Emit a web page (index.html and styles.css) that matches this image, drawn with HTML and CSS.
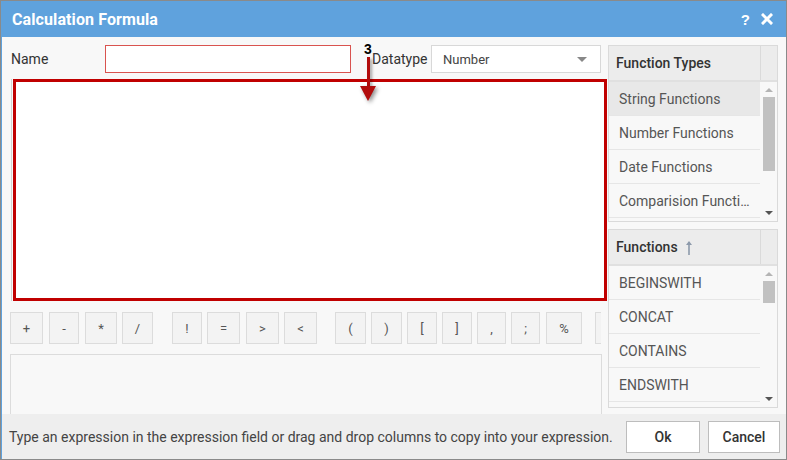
FILE: index.html
```html
<!DOCTYPE html>
<html>
<head>
<meta charset="utf-8">
<link rel="stylesheet" href="styles.css">
</head>
<body>
<div class="dialog">
  <div class="titlebar">
    <span class="title">Calculation Formula</span>
    <div class="tools">
      <span class="help">?</span>
      <svg class="close" width="12" height="12" viewBox="0 0 12 12"><path d="M2 2L10 10M10 2L2 10" stroke="#fff" stroke-width="3" stroke-linecap="square"/></svg>
    </div>
  </div>
  <div class="main">
    <div class="left">
      <div class="row1">
        <label class="lbl name-lbl">Name</label>
        <div class="name-input"></div>
        <label class="lbl dt-lbl">Datatype</label>
        <div class="select"><span class="sel-text">Number</span><span class="caret"></span></div>
      </div>
      <div class="editor-wrap"><div class="editor"></div></div>
      <div class="ops">
        <span class="op">+</span><span class="op">-</span><span class="op">*</span><span class="op">/</span>
        <span class="op">!</span><span class="op">=</span><span class="op">&gt;</span><span class="op">&lt;</span>
        <span class="op">(</span><span class="op">)</span><span class="op">[</span><span class="op">]</span><span class="op">,</span><span class="op">;</span><span class="op">%</span>
        <span class="op"></span>
      </div>
      <div class="desc"></div>
    </div>
    <div class="right">
      <div class="panel types">
        <div class="phead"><span class="ptitle">Function Types</span><span class="pcorner"></span></div>
        <div class="pbody">
          <ul class="plist">
            <li class="sel">String Functions</li>
            <li>Number Functions</li>
            <li>Date Functions</li>
            <li>Comparision Functi…</li>
          </ul>
          <div class="sbar">
            <span class="arr up"></span>
            <span class="thumb thumb-types"></span>
            <span class="arr down"></span>
          </div>
        </div>
      </div>
      <div class="panel funcs">
        <div class="phead"><span class="ptitle">Functions
          <svg class="sort" width="8" height="15" viewBox="0 0 8 15"><path d="M4 2V15" stroke="#8d9aab" stroke-width="1.6"/><path d="M1 5L4 1L7 5Z" fill="#8d9aab"/></svg></span><span class="pcorner"></span></div>
        <div class="pbody">
          <ul class="plist">
            <li>BEGINSWITH</li>
            <li>CONCAT</li>
            <li>CONTAINS</li>
            <li>ENDSWITH</li>
          </ul>
          <div class="sbar">
            <span class="arr up"></span>
            <span class="thumb thumb-funcs"></span>
            <span class="arr down"></span>
          </div>
        </div>
      </div>
    </div>
  </div>
  <div class="footer">
    <span class="hint">Type an expression in the expression field or drag and drop columns to copy into your expression.</span>
    <div class="btns"><span class="btn ok">Ok</span><span class="btn cancel">Cancel</span></div>
  </div>
  <div class="annot">
    <span class="num">3</span>
    <span class="shaft"></span>
    <span class="head"></span>
  </div>
</div>
</body>
</html>
```

FILE: styles.css
```css
* { box-sizing: border-box; }
html, body { margin: 0; padding: 0; background: #fff; }
body { font-family: Roboto, "Liberation Sans", Arial, sans-serif; font-size: 14px; color: #333; }

.dialog {
  position: relative;
  width: 787px;
  height: 460px;
  border: 1px solid #8a8a8a;
  background: #f8f8f8;
  overflow: hidden;
}

.titlebar {
  height: 36px;
  background: #5fa2dd;
  display: flex;
  align-items: center;
  justify-content: space-between;
  padding: 0 13px 0 11px;
}
.title { color: #fff; font-weight: bold; font-size: 16px; letter-spacing: 0.1px; }
.tools { display: flex; align-items: center; gap: 11px; }
.help { color: #fff; font-weight: bold; font-size: 15px; font-family: "Liberation Sans", Arial, sans-serif; }
.close { display: block; }

.main {
  height: 377px;
  display: flex;
  padding-top: 8px;
  border-left: 1px solid #5fa2dd;
}
.left { width: 606px; padding-left: 9px; }

.row1 { display: flex; align-items: center; height: 28px; }
.lbl { color: #333; font-size: 14px; }
.name-lbl { width: 94px; }
.name-input { width: 246px; height: 28px; border: 1px solid #d9534f; background: #fff; }
.dt-lbl { margin-left: 21px; width: 59px; }
.select {
  width: 170px; height: 28px; border: 1px solid #d8d8d8; background: #fff;
  display: flex; align-items: center; justify-content: space-between; padding: 0 13px 0 11px;
}
.sel-text { font-size: 13px; color: #444; }
.caret { width: 0; height: 0; border-left: 5px solid transparent; border-right: 5px solid transparent; border-top: 5px solid #888; }

.editor-wrap { margin-top: 6px; display: flex; border-left: 1px solid #d4d4d4; padding-left: 1px; height: 222px; }
.editor { width: 594px; height: 222px; border: 3px solid #c00000; background: #fff; }

.ops { margin-top: 11px; margin-left: -1px; width: 591px; height: 32px; display: flex; overflow: hidden; }
.op {
  flex: none; height: 32px; border: 1px solid #dcdcdc; background: #f3f3f3; color: #555;
  font-size: 13px; display: flex; align-items: center; justify-content: center; margin-left: 5px;
}
.op:nth-child(1) { width: 33px; margin-left: 0; }
.op:nth-child(2) { width: 30px; margin-left: 6px; }
.op:nth-child(3) { width: 32px; margin-left: 6px; }
.op:nth-child(4) { width: 31px; }
.op:nth-child(5) { width: 30px; margin-left: 19px; }
.op:nth-child(6) { width: 33px; }
.op:nth-child(7) { width: 33px; margin-left: 6px; }
.op:nth-child(8) { width: 33px; }
.op:nth-child(9) { width: 31px; margin-left: 18px; }
.op:nth-child(10) { width: 31px; }
.op:nth-child(11) { width: 30px; }
.op:nth-child(12) { width: 30px; }
.op:nth-child(13) { width: 29px; }
.op:nth-child(14) { width: 29px; }
.op:nth-child(15) { width: 36px; margin-left: 6px; }
.op:nth-child(16) { width: 32px; margin-left: 13px; }

.desc { margin-top: 10px; margin-left: -1px; width: 592px; height: 60px; border: 1px solid #dcdcdc; border-bottom: none; background: #f8f8f8; }

.right { width: 170px; display: flex; flex-direction: column; gap: 7px; }
.panel { border: 1px solid #dadada; background: #f8f8f8; display: flex; flex-direction: column; }
.types { height: 177px; }
.funcs { height: 179px; }
.phead { height: 36px; flex: none; display: flex; background: #ececec; border-bottom: 2px solid #e0e0e0; }
.ptitle { flex: 1; display: flex; align-items: center; padding-left: 7px; font-weight: 500; font-size: 14px; color: #333; gap: 7px; }
.sort { display: block; margin-top: 1px; }
.pcorner { width: 17px; border-left: 1px solid #dadada; }
.pbody { flex: 1; display: flex; min-height: 0; }
.plist { list-style: none; margin: 0; padding: 0; flex: 1; min-width: 0; }
.plist li {
  height: 34px; border-bottom: 1px solid #e6e6e6; padding-left: 10px; padding-top: 1px;
  color: #555; font-size: 14px; white-space: nowrap;
  display: block; line-height: 33px;
}
.plist li.sel { background: #e8e8e8; }
.sbar { width: 17px; flex: none; background: #f8f8f8; display: flex; flex-direction: column; align-items: center; }
.arr { width: 0; height: 0; border-left: 4px solid transparent; border-right: 4px solid transparent; }
.arr.up { border-bottom: 4px solid #b4b4b4; margin-top: 6px; }
.arr.down { border-top: 4px solid #555; margin-top: auto; margin-bottom: 6px; }
.thumb { width: 12px; background: #c1c1c1; margin-top: 5px; }
.thumb-types { height: 74px; }
.thumb-funcs { height: 22px; }

.footer {
  height: 45px; background: #eeeeee; display: flex; align-items: center; justify-content: space-between;
  padding: 0 6px 0 7px; border-left: 1px solid #5fa2dd;
}
.hint { color: #444; font-size: 14px; }
.btns { display: flex; gap: 8px; }
.btn {
  height: 32px; border: 1px solid #bdbdbd; background: #fff; color: #333; font-weight: 500; font-size: 14px;
  display: flex; align-items: center; justify-content: center;
}
.ok { width: 74px; }
.cancel { width: 72px; }

.annot { position: absolute; left: 358px; top: 40px; width: 20px; height: 62px; }
.num { position: absolute; left: 5px; top: 0; font-weight: bold; font-size: 14px; color: #000; font-family: "Liberation Sans", Arial, sans-serif; }
.shaft { position: absolute; left: 8px; top: 16px; width: 3px; height: 31px; background: #b20c0c; box-shadow: 2px 2px 3px rgba(0,0,0,0.35); }
.head { position: absolute; left: 1px; top: 45px; width: 0; height: 0; border-left: 8px solid transparent; border-right: 8px solid transparent; border-top: 15px solid #b20c0c; filter: drop-shadow(2px 2px 2px rgba(0,0,0,0.45)); }
```
